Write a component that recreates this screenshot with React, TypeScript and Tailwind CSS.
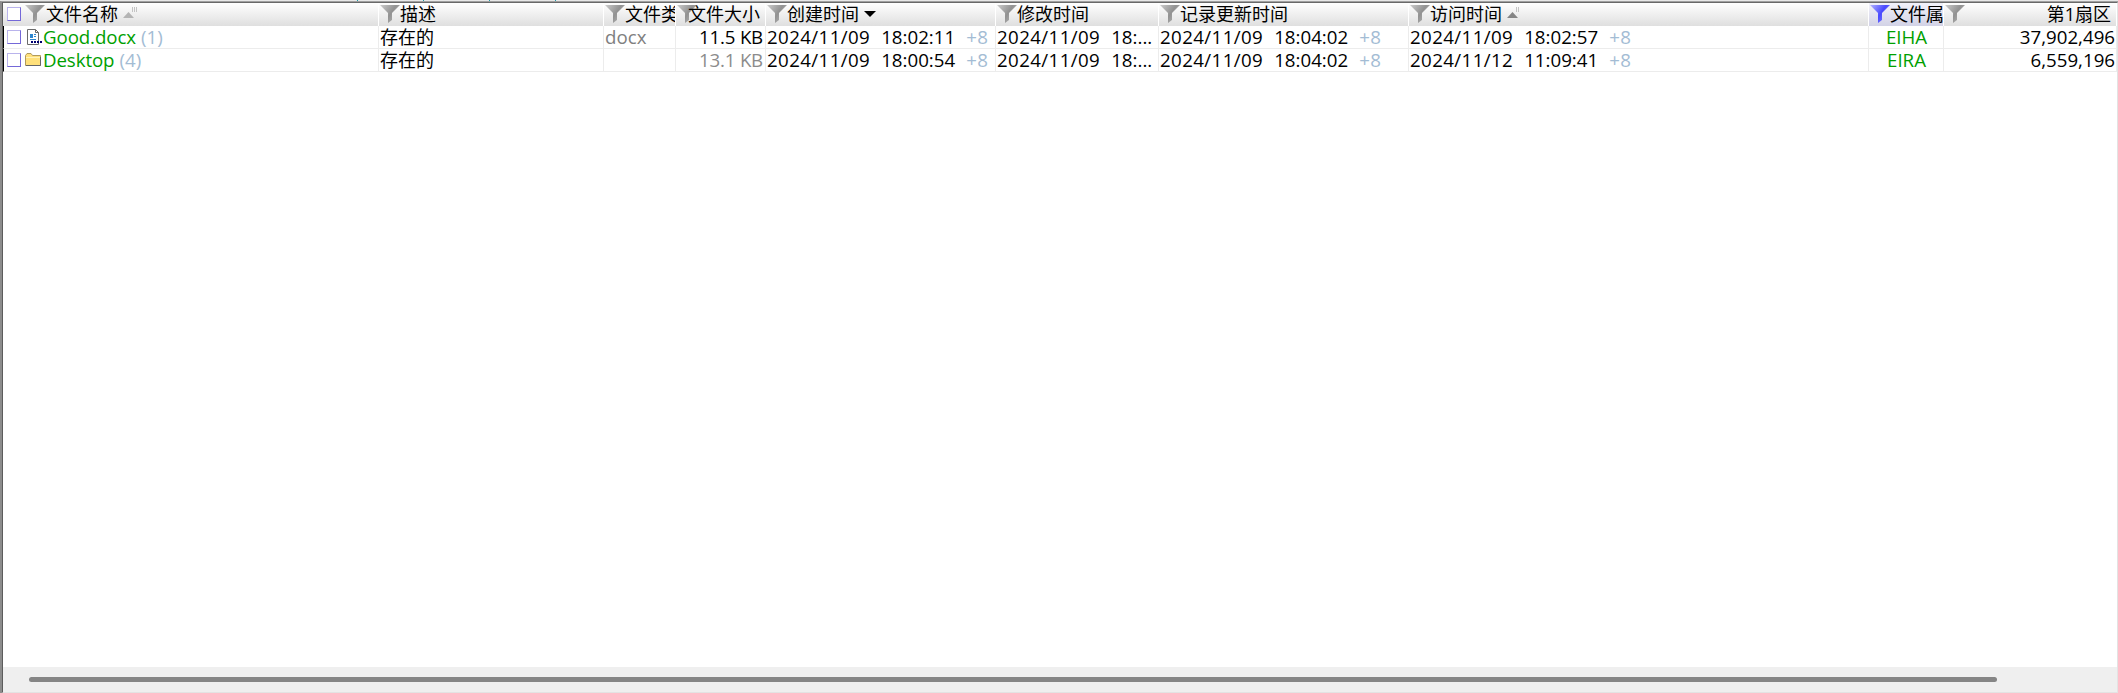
import type { ReactNode } from "react";

interface Stamp {
  date: string;
  time: string;
  zone?: string;
}

interface FileRow {
  name: string;
  count: number;
  icon: "doc" | "folder";
  ext: string;
  size: string;
  dimSize: boolean;
  created: Stamp;
  modified: Stamp;
  updated: Stamp;
  accessed: Stamp;
  attrs: string;
  sector: string;
}

const rows: FileRow[] = [
  {
    name: "Good.docx",
    count: 1,
    icon: "doc",
    ext: "docx",
    size: "11.5 KB",
    dimSize: false,
    created: { date: "2024/11/09", time: "18:02:11", zone: "+8" },
    modified: { date: "2024/11/09", time: "18:..." },
    updated: { date: "2024/11/09", time: "18:04:02", zone: "+8" },
    accessed: { date: "2024/11/09", time: "18:02:57", zone: "+8" },
    attrs: "EIHA",
    sector: "37,902,496",
  },
  {
    name: "Desktop",
    count: 4,
    icon: "folder",
    ext: "",
    size: "13.1 KB",
    dimSize: true,
    created: { date: "2024/11/09", time: "18:00:54", zone: "+8" },
    modified: { date: "2024/11/09", time: "18:..." },
    updated: { date: "2024/11/09", time: "18:04:02", zone: "+8" },
    accessed: { date: "2024/11/12", time: "11:09:41", zone: "+8" },
    attrs: "EIRA",
    sector: "6,559,196",
  },
];

const grid =
  "grid grid-cols-[376px_225px_72px_90px_230px_163px_250px_460px_75px_173px]";

function Funnel({ active = false }: { active?: boolean }) {
  const id = active ? "funnel-on" : "funnel-off";
  return (
    <svg width="20" height="18" viewBox="0 0 20 18" className="shrink-0">
      <defs>
        <linearGradient id={id} x1="0" y1="0" x2="1" y2="0.6">
          <stop offset="0" stopColor={active ? "#b4b4ff" : "#cccccc"} />
          <stop offset="0.6" stopColor={active ? "#4a4aff" : "#929292"} />
          <stop offset="1" stopColor={active ? "#7c7cff" : "#b4b4b4"} />
        </linearGradient>
      </defs>
      <path d="M0 0H20L12 8V15L8 18V8Z" fill={`url(#${id})`} />
    </svg>
  );
}

function Checkbox() {
  return (
    <span className="h-[14px] w-[14px] shrink-0 border border-t-[#b9b3ec] border-l-[#b9b3ec] border-r-[#7468d8] border-b-[#7468d8] bg-white" />
  );
}

function DocIcon() {
  return (
    <svg width="16" height="16" viewBox="0 0 16 16" className="ml-0.5 shrink-0">
      <path d="M.5 .5H8.5L11.5 3.5V15.5H.5Z" fill="#fff" stroke="#6a6a6a" />
      <path d="M8.5 .5V3.5H11.5" fill="none" stroke="#6a6a6a" />
      <path d="M3 5h3v4H3zM7 5h2v1H7zM7 7h2v1H7zM3 10h6v1H3z" fill="#2d86cf" />
      <path d="M4 12h2v2H4zM7 12h2v2H7zM10 12h2v2h-2zM13 12h2v2h-2z" fill="#000070" />
    </svg>
  );
}

function FolderIcon() {
  return (
    <svg width="17" height="14" viewBox="0 0 17 14" className="shrink-0">
      <path d="M.5 12.5V2.5L2 .5H6L7.5 2.5H15.5V12.5Z" fill="#ffe07a" stroke="#b09a5c" />
      <path d="M1 4.5H15" stroke="#fff3b8" />
      <path d="M1 12.5H15.5V4" fill="none" stroke="#666" />
    </svg>
  );
}

function SortArrow({ bars }: { bars: number }) {
  return (
    <svg width="16" height="12" viewBox="0 0 16 12" className="-mt-0.5 shrink-0">
      <path d="M0 11L5.5 5L11 11Z" fill={bars === 3 ? "#b4b4b4" : "#858585"} />
      <path d={bars === 3 ? "M9.5 0V5M11.5 0V5M13.5 0V5" : "M9.5 0V5M11.5 0V5"} stroke="#c4c4c4" />
    </svg>
  );
}

function Head({ children, active = false }: { children: ReactNode; active?: boolean }) {
  return (
    <div
      className={`flex h-[23px] items-center overflow-x-clip border-r border-white pb-px pl-px text-[18px] whitespace-nowrap ${
        active ? "bg-linear-to-b from-[#f2f2fa] to-[#d2d2e6]" : ""
      }`}
    >
      <Funnel active={active} />
      {children}
    </div>
  );
}

function Cell({ children, className = "pl-px" }: { children?: ReactNode; className?: string }) {
  return (
    <div
      className={`flex h-[23px] items-center border-r border-b border-[#ececec] whitespace-pre ${className}`}
    >
      {children}
    </div>
  );
}

function Time({ stamp }: { stamp: Stamp }) {
  return (
    <Cell>
      <span className="tracking-[0.4px]">{stamp.date}</span>
      <span className="ml-[11px]">{stamp.time}</span>
      {stamp.zone && <span className="ml-[11px] tracking-[0.4px] text-[#a3bcd4]">{stamp.zone}</span>}
    </Cell>
  );
}

export default function App() {
  return (
    <div className="flex h-[693px] w-[2118px] flex-col overflow-hidden bg-white font-['Open_Sans','Noto_Sans_CJK_SC',sans-serif] text-[18.7px] leading-[22px] text-black">
      {/* lower edge of the tab strip above the list */}
      <div className="flex h-px gap-[65px] bg-[#e8e8e8] pl-[357px]">
        <div className="w-px bg-[#1f9aa8]" />
        <div className="w-px bg-[#1f9aa8]" />
        <div className="w-px bg-[#1f9aa8]" />
        <div className="w-px bg-[#1f9aa8]" />
      </div>
      <div className="flex min-h-0 flex-1 border-t border-l-2 border-t-[#a0a0a0] border-l-[#8c8c8c]">
        <div className="flex min-w-0 flex-1 flex-col border border-t-[#696969] border-r-[#e3e3e3] border-b-[#e3e3e3] border-l-[#5c5c5c]">
          <div className={`${grid} bg-linear-to-b from-white to-[#dfdfdf]`}>
            <div className="flex h-[23px] items-center border-r border-white pb-px pl-1 text-[18px]">
              <Checkbox />
              <span className="w-1" />
              <Funnel />
              <span className="ml-px">文件名称</span>
              <span className="ml-[5px]">
                <SortArrow bars={3} />
              </span>
            </div>
            <Head>描述</Head>
            <Head>文件类</Head>
            <Head>
              <span className="-ml-[9px]">文件大小</span>
            </Head>
            <Head>
              创建时间
              <svg width="12" height="6" viewBox="0 0 12 6" className="ml-[5px]">
                <path d="M0 0H12L6 6Z" />
              </svg>
            </Head>
            <Head>修改时间</Head>
            <Head>记录更新时间</Head>
            <Head>
              访问时间
              <span className="ml-[5px]">
                <SortArrow bars={2} />
              </span>
            </Head>
            <Head active>文件属</Head>
            <Head>
              <span className="ml-auto pr-[5px]">第1扇区</span>
            </Head>
          </div>
          {rows.map((row) => (
            <div key={row.name} className={grid}>
              <Cell className="border-l border-l-black pl-[3px]">
                <Checkbox />
                <span className="ml-1 flex w-[18px]">
                  {row.icon === "doc" ? <DocIcon /> : <FolderIcon />}
                </span>
                <span className="tracking-[-0.1px] text-[#00a000]">{row.name}</span>
                <span className="ml-[5px] text-[#a3bcd4]">({row.count})</span>
              </Cell>
              <Cell className="pl-px text-[18px]">存在的</Cell>
              <Cell className="pl-px text-[#808080]">{row.ext}</Cell>
              <Cell
                className={`justify-end pr-0.5 tracking-[-0.2px] ${row.dimSize ? "text-[#8c8c8c]" : ""}`}
              >
                {row.size}
              </Cell>
              <Time stamp={row.created} />
              <Time stamp={row.modified} />
              <Time stamp={row.updated} />
              <Time stamp={row.accessed} />
              <Cell className="justify-center pl-px text-[#00a000]">{row.attrs}</Cell>
              <Cell className="justify-end pr-px">{row.sector}</Cell>
            </div>
          ))}
          <div className="flex-1" />
          <div className="flex h-[25px] items-center bg-[#efefef] pl-[26px]">
            <div className="h-[5px] w-[1968px] rounded-full bg-[#858585]" />
          </div>
        </div>
      </div>
    </div>
  );
}
